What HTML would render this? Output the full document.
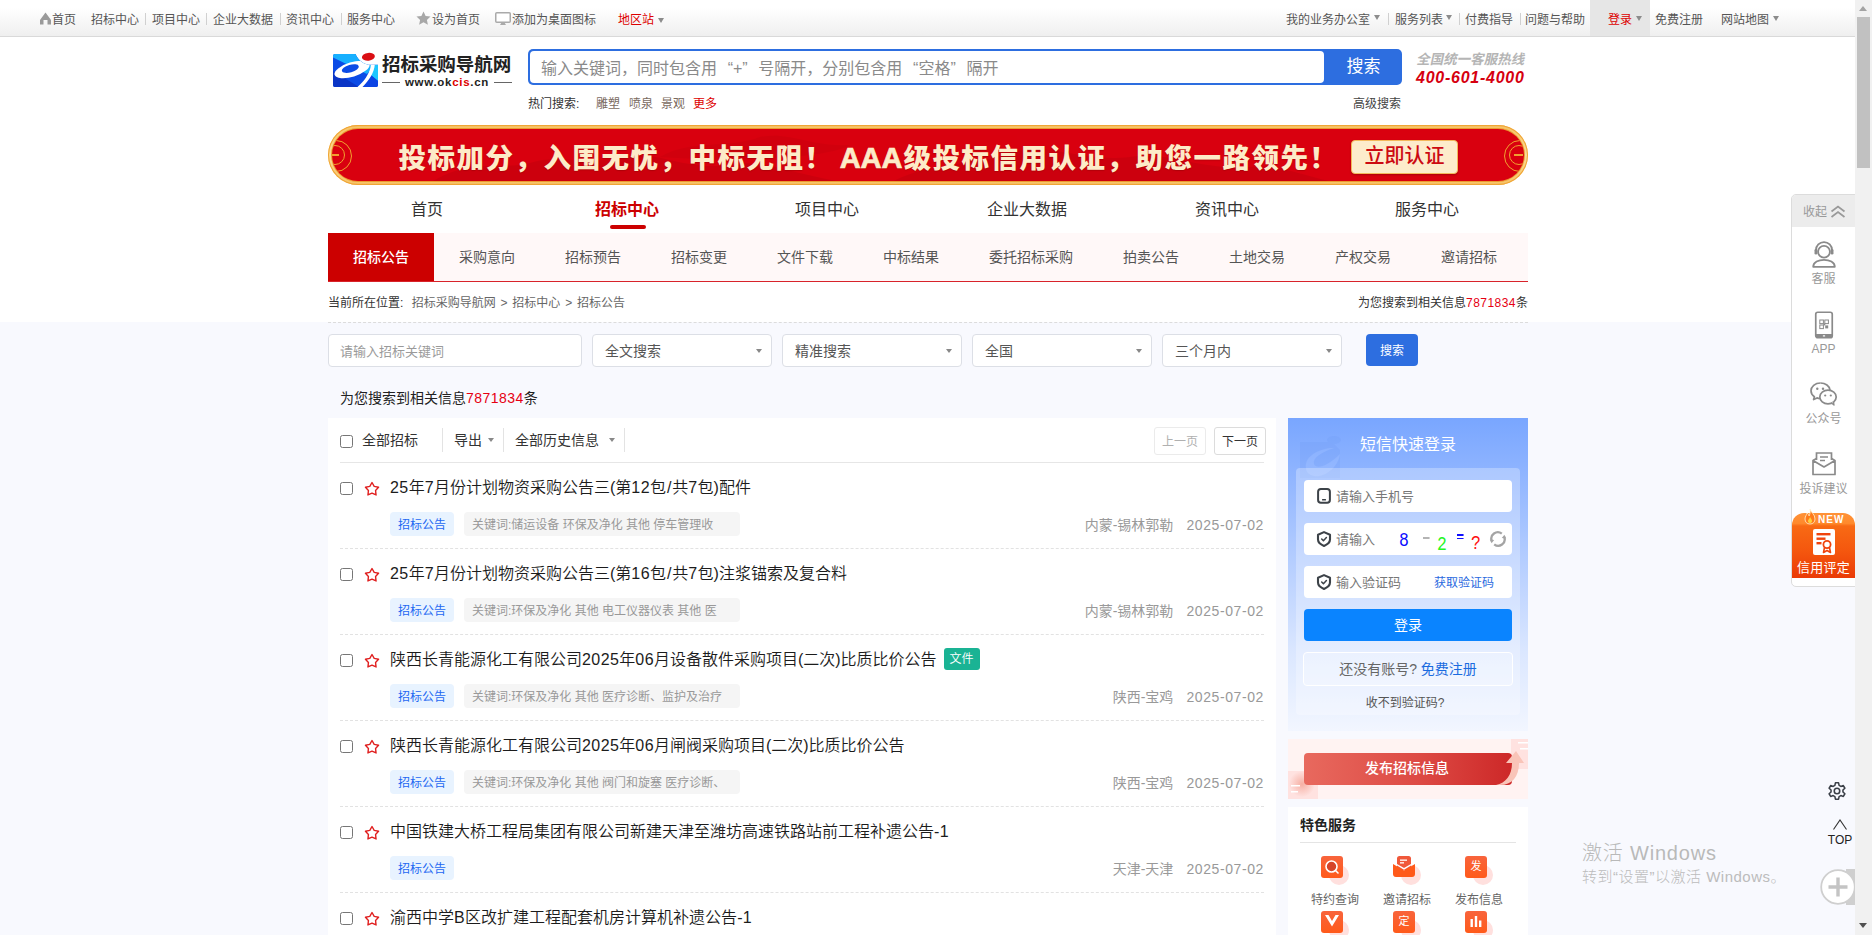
<!DOCTYPE html>
<html lang="zh-CN">
<head>
<meta charset="utf-8">
<title>招标公告 - 招标采购导航网</title>
<style>
*{box-sizing:border-box;margin:0;padding:0}
html,body{width:1872px;height:935px;overflow:hidden;background:#fff}
body{font-family:"Liberation Sans","Noto Sans CJK SC",sans-serif;font-size:12px;color:#333;position:relative}
a{color:inherit;text-decoration:none}
ul{list-style:none}
.abs{position:absolute}
#page{position:absolute;left:0;top:0;width:1855px;height:935px;overflow:hidden;background:#fff}
/* fake scrollbar */
#sb{position:absolute;left:1855px;top:0;width:17px;height:935px;background:#f1f1f1}
#sb .th{position:absolute;left:2px;top:17px;width:13px;height:151px;background:#c1c1c1}
#sb .up{position:absolute;left:4px;top:6px;width:0;height:0;border-left:4.5px solid transparent;border-right:4.5px solid transparent;border-bottom:5px solid #a3a3a3}
#sb .dn{position:absolute;left:4px;top:923px;width:0;height:0;border-left:4.5px solid transparent;border-right:4.5px solid transparent;border-top:5px solid #505050}
/* top bar */
#top{position:absolute;left:0;top:0;width:1855px;height:37px;background:linear-gradient(#fff 0,#fff 8px,#efefef 100%);border-bottom:1px solid #d9d9d9;color:#555;font-size:12px;line-height:37px}
#top span,#top a{position:absolute;top:0;white-space:nowrap}
#top a{top:1.5px}
#top .sep{color:#ccc;width:1px;height:12px;top:13px;background:#d0d0d0}
#top .car{width:0;height:0;border-left:3.5px solid transparent;border-right:3.5px solid transparent;border-top:5px solid #8c8c8c}

/* header */
#logo{position:absolute;left:332px;top:50px;width:182px;height:40px}
#logo .t1{position:absolute;left:50px;top:2px;font-size:18.5px;font-weight:700;color:#222;letter-spacing:-.05px;white-space:nowrap;line-height:26px}
#logo .t2{position:absolute;left:50px;top:24px;width:130px;font-family:"Liberation Sans",sans-serif;font-size:11.5px;font-weight:700;color:#222;white-space:nowrap;line-height:16px;letter-spacing:.7px;text-align:center}
#logo .t2 b{color:#d00}
#logo .ln{position:absolute;top:32px;height:1px;width:18px;background:#666}
#sbwrap{position:absolute;left:528px;top:49px;width:874px;height:36px;border-radius:5px;background:#2d6ee0}
#sbox{position:absolute;left:530px;top:51px;width:794px;height:32px;border-radius:4px;background:#fff;font-size:16px;line-height:35px;color:#8a8a8a;padding-left:11px;white-space:nowrap}
#sbox q{display:inline-block;width:16px;quotes:none}#sbox q.l{text-align:right}#sbox q.r{text-align:left}
#sbtn{position:absolute;left:1325px;top:49px;width:77px;height:36px;color:#fff;font-size:17px;line-height:35px;text-align:center}
#hot{position:absolute;left:528px;top:95.5px;font-size:12px;line-height:16px;white-space:nowrap;color:#333}
#hot a{position:absolute;top:0;color:#7a6a60}
#adv{position:absolute;left:1353px;top:95.5px;font-size:12px;line-height:16px;color:#444}
#tel1{position:absolute;left:1417px;top:51px;font-size:13.5px;font-weight:700;color:#b5b5b5;line-height:18px;white-space:nowrap;transform:skewX(-12deg)}
#tel2{position:absolute;left:1416px;top:67.5px;font-size:16px;font-weight:700;font-style:italic;color:#d6000f;line-height:20px;white-space:nowrap;letter-spacing:.75px}
/* banner */
#ban{position:absolute;left:328px;top:125px;width:1200px;height:60px;border-radius:30px;background:linear-gradient(#efa236 0,#f6c468 3%,#fbdc96 50%,#f6c468 97%,#efa236 100%);overflow:hidden;box-shadow:inset 0 0 0 1px #f0a535}
#ban .in{position:absolute;left:4px;top:4px;right:4px;bottom:4px;border-radius:26px;background:#d9000f;overflow:hidden;box-shadow:0 0 0 1px #eb9a30}
#ban .tx{position:absolute;left:66.5px;top:8.5px;font-size:27.5px;letter-spacing:1.5px;font-weight:900;color:#fdebc8;line-height:40px;white-space:nowrap;text-shadow:0 1px 1px rgba(120,0,0,.35)}
#ban .bt{position:absolute;left:1019px;top:11px;width:107px;height:34px;border-radius:4px;background:#fdeccb;border:1.5px solid #f3b75a;color:#cc0a12;font-size:20px;font-weight:500;line-height:31px;text-align:center;box-shadow:0 1px 2px rgba(100,0,0,.4)}
#ban .ring{position:absolute;top:10.500px;width:32px;height:32px;border-radius:50%;border:1.800px solid #f0a030}
#ban .ring i{position:absolute;left:4.200px;top:4.200px;width:20px;height:20px;border-radius:50%;border:1.800px solid #f0a030}
#ban .ring u{position:absolute;left:9px;top:13.300px;width:9px;height:1.800px;background:#f0a030}
#ban .mt{position:absolute;left:-2px;top:-2px}
/* nav */
#nav a{position:absolute;top:198px;width:200px;text-align:center;font-size:16px;line-height:24px;color:#333}
#nav a.on{color:#cc0000;font-weight:700}
#nav i{position:absolute;left:610px;top:225px;width:36px;height:4px;border-radius:2px;background:#cc0000}
#sub{position:absolute;left:328px;top:233px;width:1200px;height:49px;background:#fff8f8;border-bottom:1.5px solid #d8232a;font-size:14px;line-height:49px;color:#555;white-space:nowrap}
#sub a{display:inline-block;padding:0 25px;height:48px;vertical-align:top}
#sub a.on{background:#cc0000;color:#fff;font-weight:500}
#crumb{position:absolute;left:328px;top:295px;width:1200px;font-size:12px;line-height:16px;color:#666}
#crumb b{font-weight:400;color:#333}
#crumb .r{position:absolute;right:0;top:0;color:#333}
#crumb .r em{font-style:normal;color:#e60012;letter-spacing:.45px}
#crumb s{text-decoration:none;margin:0 1.5px}
#dash{position:absolute;left:328px;top:322px;width:1200px;height:0;border-top:1px dashed #dcdcdc}
#bg{position:absolute;left:0;top:322px;width:1855px;height:613px;background:#f8f9fe}
.wrap{position:absolute;left:328px;width:1200px}

/* filter */
.fi{position:absolute;top:334px;height:33px;background:#fff;border:1px solid #dcdfe6;border-radius:4px;font-size:14px;line-height:33px;padding-left:12px;color:#555;white-space:nowrap}
.fi.ph{color:#9a9a9a;font-size:13px;padding-left:11px}
.fi i{position:absolute;right:9px;top:14px;width:0;height:0;border-left:3.5px solid transparent;border-right:3.5px solid transparent;border-top:4.5px solid #888}
#fbtn{position:absolute;left:1366px;top:334px;width:52px;height:32px;border-radius:4px;background:#2d6ee0;color:#fff;font-size:12px;line-height:34px;text-align:center}
#cnt{position:absolute;left:340px;top:388px;font-size:14px;line-height:20px;color:#222;white-space:nowrap}
#cnt em{font-style:normal;color:#e60012;letter-spacing:.45px}
/* list */
#list{position:absolute;left:328px;top:418px;width:948px;height:520px;background:#fff}
.cb{position:absolute;width:13px;height:13px;border:1px solid #767676;border-radius:2.5px;background:#fff}
#lh{position:absolute;left:12px;top:0;width:924px;height:45px;border-bottom:1px solid #e6e6e6;font-size:14px;line-height:20px;color:#333}
#lh span{position:absolute;top:12px;white-space:nowrap}
#lh .sp{top:10px;width:1px;height:24px;background:#e3e3e3}
#lh .ca{top:20px;width:0;height:0;border-left:3.5px solid transparent;border-right:3.5px solid transparent;border-top:4.5px solid #888}
#lh .pg{top:9px;height:28px;width:52px;border:1px solid #dcdcdc;border-radius:3px;text-align:center;line-height:28.5px;font-size:12px;background:#fff;color:#333}
.it{position:absolute;left:12px;width:924px;height:86px;border-bottom:1px dashed #e2e2e2}
.it .cb{left:0;top:18.5px}
.it svg{position:absolute;left:24px;top:17.500px}
.it .ti{position:absolute;left:50px;top:13px;font-size:16px;line-height:24px;color:#1c1c1c;white-space:nowrap;font-weight:350}
.it .ti i{font-style:normal;letter-spacing:.42px}
.it .ti i.s{letter-spacing:0;margin:0 .9px}
.it .tg{position:absolute;left:50px;top:49px;width:64px;height:24px;border-radius:4px;background:#e8f3ff;color:#2468f2;font-size:12px;line-height:26px;text-align:center}
.it .kw{position:absolute;left:124px;top:49px;width:276px;height:24px;border-radius:4px;background:#f5f5f5;color:#999;font-size:12px;line-height:26px;padding-left:8px;white-space:nowrap;overflow:hidden}
.it .rt{position:absolute;right:0;top:52px;font-size:14px;line-height:20px;color:#999;white-space:nowrap}
.it .rt b{font-weight:400;margin-left:13px;letter-spacing:.6px}
.it .fl{display:inline-block;vertical-align:top;margin:0 0 0 7px;width:36px;height:22px;border-radius:3px;background:#1ab394;color:#fff;font-size:12px;line-height:22px;text-align:center}

/* login */
#lg{position:absolute;left:1288px;top:418px;width:240px;height:313px;background:linear-gradient(#79a6ff 0,#8db3ff 16%,#b4cdff 45%,#dbe7ff 75%,#f2f6ff 100%);overflow:hidden}
#lg .wm{position:absolute;left:6px;top:10px;opacity:.05}
#lg h3{position:absolute;left:0;top:13.5px;width:240px;text-align:center;font-size:16px;font-weight:400;color:#fff;line-height:26px}
#lg .in{position:absolute;left:8px;top:50px;width:224px;height:246.5px;border-radius:4px;background:rgba(255,255,255,.28)}
#lg .ip{position:absolute;left:16px;width:208px;height:32px;border-radius:4px;background:#fff;font-size:13px;line-height:34px;color:#777;padding-left:32px;white-space:nowrap}
#lg .ip svg{position:absolute;left:12px;top:8px}
#lg .lb{position:absolute;left:16px;top:191px;width:208px;height:32px;border-radius:4px;background:#0a84ff;color:#fff;font-size:14px;line-height:32px;text-align:center}
#lg .rg{position:absolute;left:15px;top:234px;width:210px;height:34px;border-radius:4px;border:1px solid #fff;background:rgba(255,255,255,.25);font-size:14px;line-height:32px;text-align:center;color:#666}
#lg .rg a{color:#1a6be0}
#lg .no{position:absolute;left:0;top:275.5px;width:234px;text-align:center;font-size:12px;line-height:18px;color:#555}
#lg .cap{position:absolute;font-family:"Liberation Mono",monospace;font-weight:400;font-size:20px;line-height:20px;transform:scaleX(.82);transform-origin:0 0}
/* publish */
#pub{position:absolute;left:1288px;top:739px;width:240px;height:60px;background:#fff3f2;overflow:hidden}
#pub .b{position:absolute;left:16px;top:14px;width:208px;height:32px;border-radius:4px;background:linear-gradient(90deg,#e8695e 0,#dd4a44 55%,#cd2828 100%);color:#fff;font-size:14px;font-weight:500;line-height:31px;text-align:center;padding-right:2px}
/* services */
#svc{position:absolute;left:1288px;top:807px;width:240px;height:140px;background:#fff}
#svc h4{position:absolute;left:12px;top:8px;font-size:14px;font-weight:700;color:#222;line-height:20px}
#svc .l{position:absolute;left:12px;top:35px;width:216px;height:1px;background:#e4e4e4}
#svc .ic{position:absolute;width:30px;height:30px}
#svc .ic i{position:absolute;left:8px;top:9px;width:20px;height:20px;border-radius:50%;background:#ffe0de}
#svc .ic b{position:absolute;left:0;top:0;width:22px;height:22px;border-radius:3px;background:linear-gradient(#f8643c,#ff5a1a);color:#fff;font-size:11px;font-weight:400;line-height:21px;text-align:center;overflow:hidden}
#svc .ic b svg{position:absolute;left:0;top:0}
#svc .tx{position:absolute;top:85px;width:72px;text-align:center;font-size:12px;line-height:16px;color:#666}

/* float */
#fl{position:absolute;left:1791px;top:194px;width:70px;height:393px;border:1px solid #dcdcdc;border-radius:5px;background:#fff;overflow:hidden}
#fl .h{position:absolute;left:0;top:0;width:70px;height:32px;background:#ececec;color:#999;font-size:12px;line-height:35px;padding-left:11px}
#fl .h svg{position:absolute;left:38px;top:9.5px}
#fl .t{position:absolute;left:0;width:63px;text-align:center;font-size:12px;line-height:16px;color:#999}
#fl svg.i{position:absolute}
#fl .cr{position:absolute;left:0;top:318px;width:63px;height:65px;border-radius:12px 12px 0 0;background:linear-gradient(#ff9238 0,#ff8a2c 16%,#f86a14 20%,#f4560e 60%,#ea3a06 100%)}
#fl .cr .n{position:absolute;left:26px;top:1px;font-size:10px;font-weight:700;color:#fff;letter-spacing:1px;line-height:12px}
#fl .cr .c{position:absolute;left:0;top:46.5px;width:63px;text-align:center;font-size:13px;color:#fff;line-height:16px;letter-spacing:.3px}
#wm1{position:absolute;left:1582px;top:840px;font-size:20px;line-height:26px;color:#b9b9b9;white-space:nowrap;letter-spacing:.8px;font-weight:300}
#wm2{position:absolute;left:1582px;top:866.5px;font-size:15px;line-height:20px;color:#bcbcbc;white-space:nowrap;font-weight:300;letter-spacing:.5px}
#topb{position:absolute;left:1826px;top:833px;width:28px;text-align:center;font-size:12px;line-height:14px;color:#222}
#plus{position:absolute;left:1820px;top:869px;width:36px;height:36px}
</style>
</head>
<body>
<div id="page">

<div id="top">
  <svg class="abs" style="left:38.5px;top:12px" width="13" height="13" viewBox="0 0 13 13"><path d="M6.5 0.5 L12 8 L12 12.5 L8.5 12.5 L8.5 8 L4.5 8 L4.5 12.5 L1 12.5 L1 8 Z" fill="#9a9a9a"/></svg>
  <a style="left:52px">首页</a>
  <a style="left:91px">招标中心</a><span class="sep" style="left:145px"></span>
  <a style="left:152px">项目中心</a><span class="sep" style="left:206px"></span>
  <a style="left:213px">企业大数据</a><span class="sep" style="left:280px"></span>
  <a style="left:286px">资讯中心</a><span class="sep" style="left:341px"></span>
  <a style="left:347px">服务中心</a>
  <svg class="abs" style="left:416px;top:11px" width="15" height="14" viewBox="0 0 15 14"><path d="M7.5 0.5 L9.6 5 L14.5 5.6 L10.9 8.9 L11.9 13.7 L7.5 11.3 L3.1 13.7 L4.1 8.9 L0.5 5.6 L5.4 5 Z" fill="#a8a8a8"/></svg>
  <a style="left:432px">设为首页</a>
  <svg class="abs" style="left:495px;top:12px" width="16" height="14" viewBox="0 0 16 14"><rect x="0.75" y="0.75" width="14.5" height="9.5" rx="1" fill="#fff" stroke="#aaa" stroke-width="1.5"/><path d="M5 13 L11 13 L9.5 10.5 L6.5 10.5 Z" fill="#aaa"/></svg>
  <a style="left:512px">添加为桌面图标</a>
  <a style="left:618px;color:#d00">地区站</a><span class="car" style="left:658px;top:18px"></span>

  <a style="left:1286px">我的业务办公室</a><span class="car" style="left:1374px;top:15px"></span><span class="sep" style="left:1388px"></span>
  <a style="left:1395px">服务列表</a><span class="car" style="left:1446px;top:15px"></span><span class="sep" style="left:1459px"></span>
  <a style="left:1465px">付费指导</a><span class="sep" style="left:1520px"></span>
  <a style="left:1525px">问题与帮助</a>
  <span style="left:1590px;width:60px;height:36px;background:#e6e6e6"></span>
  <a style="left:1608px;color:#d00">登录</a><span class="car" style="left:1636px;top:16px"></span>
  <a style="left:1655px">免费注册</a>
  <a style="left:1721px">网站地图</a><span class="car" style="left:1773px;top:16px"></span>
</div>


<div id="logo">
  <svg class="abs" style="left:0;top:2px" width="48" height="36" viewBox="-1 -2 48 36">
    <defs><clipPath id="lc"><path d="M2 0 L22.500 0 C24.500 5 29 9.500 35 10.700 L45 10.700 L45 31 Q45 33 43 33 L2 33 Q0 33 0 31 L0 2 Q0 0 2 0 Z"/></clipPath></defs>
    <g clip-path="url(#lc)">
      <rect x="0" y="0" width="45" height="33" fill="#0b4be6"/>
      <path d="M0 0 L24 0 L36 11 L42 11 L34 20 L0 3.500 Z" fill="#17b0ff"/>
      <path d="M0 17 L26 33 L0 33 Z" fill="#0a35c6"/>
      <path d="M38 10.700 L45 10.700 L45 27 L36 19.500 Z" fill="#1ec6ff"/>
      <path d="M36 19.500 L45 27 L45 33 L26 33 Z" fill="#0c44e4"/>
      <g transform="rotate(-17 19 15.500)"><ellipse cx="19" cy="15.500" rx="18.200" ry="7.200" fill="#fff"/></g>
      <path d="M38 9 L41.800 10.500 C41.500 18 36 26.500 29.500 33 L24.500 33 C31 27.500 36 20 37.500 13.500 Z" fill="#fff"/>
      <g transform="rotate(-16 17.300 14.600)"><ellipse cx="17.300" cy="14.600" rx="8.800" ry="3.700" fill="#0b4be6"/></g>
      <path d="M8.700 16.500 C10 13 14 11 18 10.500 C15 13 12 15.500 11 18.500 Z" fill="#17b0ff" opacity=".0"/>
    </g>
    <ellipse cx="35.400" cy="2.800" rx="6.500" ry="3.900" transform="rotate(-6 35.400 2.800)" fill="#da0f14"/>
  </svg>
  <div class="t1">招标采购导航网</div>
  <i class="ln" style="left:50px"></i><div class="t2">www.ok<b>cis</b>.cn</div><i class="ln" style="left:162px"></i>
</div>
<div id="sbwrap"></div>
<div id="sbox">输入关键词，同时包含用<q class=l>“</q>+<q class=r>”</q>号隔开，分别包含用<q class=l>“</q>空格<q class=r>”</q>隔开</div>
<div id="sbtn">搜索</div>
<div id="hot">热门搜索: <a style="left:68px">雕塑</a><a style="left:101px">喷泉</a><a style="left:133px">景观</a><a style="left:165px;color:#d00">更多</a></div>
<div id="adv">高级搜索</div>
<div id="tel1">全国统一客服热线</div>
<div id="tel2">400-601-4000</div>

<div id="ban"><div class="in">
  <svg class="mt" width="1196" height="56" viewBox="0 0 1196 56"><g fill="#b8000c" opacity=".38"><path d="M100 56 C140 30 170 44 200 36 C230 26 250 40 290 30 C330 22 350 44 400 38 C430 30 470 50 520 56 Z"/><path d="M560 56 C600 34 640 40 680 26 C720 14 750 36 800 30 C840 24 870 44 920 40 C950 36 980 52 1010 56 Z"/><path d="M330 30 C360 12 400 22 430 10 C460 4 480 20 520 18 C500 30 420 36 330 30 Z" opacity=".6"/></g></svg>
  <div class="ring" style="left:-12px"><i></i><u></u></div>
  <div class="ring" style="right:-12px"><i></i><u></u></div>
  <div class="tx">投标加分，入围无忧，中标无阻！ <span style="letter-spacing:0;font-size:29px;margin:0 1px 0 -3px;-webkit-text-stroke:.7px #fdebc8">AAA</span>级投标信用认证，助您一路领先！</div>
  <div class="bt">立即认证</div>
</div></div>

<div id="nav">
  <a style="left:327px">首页</a><a class="on" style="left:527px">招标中心</a><a style="left:727px">项目中心</a><a style="left:927px">企业大数据</a><a style="left:1127px">资讯中心</a><a style="left:1327px">服务中心</a><i></i>
</div>
<div id="sub"><a class="on">招标公告</a><a>采购意向</a><a>招标预告</a><a>招标变更</a><a>文件下载</a><a>中标结果</a><a>委托招标采购</a><a>拍卖公告</a><a>土地交易</a><a>产权交易</a><a>邀请招标</a></div>
<div id="bg"></div>
<div id="crumb"><b style="margin-right:5px">当前所在位置:</b> 招标采购导航网 <s>&gt;</s> 招标中心 <s>&gt;</s> 招标公告<span class="r">为您搜索到相关信息<em>7871834</em>条</span></div>
<div id="dash"></div>

<div class="fi ph" style="left:328px;width:254px">请输入招标关键词</div>
<div class="fi" style="left:592px;width:180px">全文搜索<i></i></div>
<div class="fi" style="left:782px;width:180px">精准搜索<i></i></div>
<div class="fi" style="left:972px;width:180px">全国<i></i></div>
<div class="fi" style="left:1162px;width:180px">三个月内<i></i></div>
<div id="fbtn">搜索</div>
<div id="cnt">为您搜索到相关信息<em>7871834</em>条</div>
<div id="list">
  <div id="lh">
    <i class="cb" style="left:0;top:17px"></i>
    <span style="left:22px">全部招标</span><span class="sp" style="left:102px"></span>
    <span style="left:114px">导出</span><span class="ca" style="left:148px"></span><span class="sp" style="left:163px"></span>
    <span style="left:175px">全部历史信息</span><span class="ca" style="left:269px"></span><span class="sp" style="left:284px"></span>
    <span class="pg" style="left:814px;color:#b0b0b0;border-color:#ebebeb">上一页</span><span class="pg" style="left:874px">下一页</span>
  </div>
<div class="it" style="top:45px"><i class="cb"></i><svg width="16" height="16" viewBox="0 0 16 16"><path d="M8.00 1.50 L10.20 5.37 L14.56 6.27 L11.57 9.56 L12.06 13.98 L8.00 12.15 L3.94 13.98 L4.43 9.56 L1.44 6.27 L5.80 5.37 Z" fill="none" stroke="#e02020" stroke-width="1.400" stroke-linejoin="round"/></svg><div class="ti"><i>25</i>年<i>7</i>月份计划物资采购公告三(第<i>12</i>包<i class=s>/</i>共<i>7</i>包)配件</div><div class="tg">招标公告</div><div class="kw">关键词:储运设备 环保及净化 其他 停车管理收</div><div class="rt">内蒙-锡林郭勒<b>2025-07-02</b></div></div>
<div class="it" style="top:131px"><i class="cb"></i><svg width="16" height="16" viewBox="0 0 16 16"><path d="M8.00 1.50 L10.20 5.37 L14.56 6.27 L11.57 9.56 L12.06 13.98 L8.00 12.15 L3.94 13.98 L4.43 9.56 L1.44 6.27 L5.80 5.37 Z" fill="none" stroke="#e02020" stroke-width="1.400" stroke-linejoin="round"/></svg><div class="ti"><i>25</i>年<i>7</i>月份计划物资采购公告三(第<i>16</i>包<i class=s>/</i>共<i>7</i>包)注浆锚索及复合料</div><div class="tg">招标公告</div><div class="kw">关键词:环保及净化 其他 电工仪器仪表 其他 医</div><div class="rt">内蒙-锡林郭勒<b>2025-07-02</b></div></div>
<div class="it" style="top:217px"><i class="cb"></i><svg width="16" height="16" viewBox="0 0 16 16"><path d="M8.00 1.50 L10.20 5.37 L14.56 6.27 L11.57 9.56 L12.06 13.98 L8.00 12.15 L3.94 13.98 L4.43 9.56 L1.44 6.27 L5.80 5.37 Z" fill="none" stroke="#e02020" stroke-width="1.400" stroke-linejoin="round"/></svg><div class="ti">陕西长青能源化工有限公司<i>2025</i>年<i>06</i>月设备散件采购项目(二次)比质比价公告<span class=fl>文件</span></div><div class="tg">招标公告</div><div class="kw">关键词:环保及净化 其他 医疗诊断、监护及治疗</div><div class="rt">陕西-宝鸡<b>2025-07-02</b></div></div>
<div class="it" style="top:303px"><i class="cb"></i><svg width="16" height="16" viewBox="0 0 16 16"><path d="M8.00 1.50 L10.20 5.37 L14.56 6.27 L11.57 9.56 L12.06 13.98 L8.00 12.15 L3.94 13.98 L4.43 9.56 L1.44 6.27 L5.80 5.37 Z" fill="none" stroke="#e02020" stroke-width="1.400" stroke-linejoin="round"/></svg><div class="ti">陕西长青能源化工有限公司<i>2025</i>年<i>06</i>月闸阀采购项目(二次)比质比价公告</div><div class="tg">招标公告</div><div class="kw">关键词:环保及净化 其他 阀门和旋塞 医疗诊断、</div><div class="rt">陕西-宝鸡<b>2025-07-02</b></div></div>
<div class="it" style="top:389px"><i class="cb"></i><svg width="16" height="16" viewBox="0 0 16 16"><path d="M8.00 1.50 L10.20 5.37 L14.56 6.27 L11.57 9.56 L12.06 13.98 L8.00 12.15 L3.94 13.98 L4.43 9.56 L1.44 6.27 L5.80 5.37 Z" fill="none" stroke="#e02020" stroke-width="1.400" stroke-linejoin="round"/></svg><div class="ti">中国铁建大桥工程局集团有限公司新建天津至潍坊高速铁路站前工程补遗公告<i>-1</i></div><div class="tg">招标公告</div><div class="rt">天津-天津<b>2025-07-02</b></div></div>
<div class="it" style="top:475px"><i class="cb"></i><svg width="16" height="16" viewBox="0 0 16 16"><path d="M8.00 1.50 L10.20 5.37 L14.56 6.27 L11.57 9.56 L12.06 13.98 L8.00 12.15 L3.94 13.98 L4.43 9.56 L1.44 6.27 L5.80 5.37 Z" fill="none" stroke="#e02020" stroke-width="1.400" stroke-linejoin="round"/></svg><div class="ti">渝西中学<i>B</i>区改扩建工程配套机房计算机补遗公告<i>-1</i></div><div class="tg">招标公告</div><div class="rt">重庆-重庆<b>2025-07-02</b></div></div>
</div>

<div id="lg">
  <svg class="wm" width="220" height="70" viewBox="0 0 220 70"><path d="M6 14 L38 14 L46 22 L46 50 L6 50 Z" fill="#2a63d8"/><path d="M12 40 C10 28 26 20 40 20 C28 24 18 30 20 36 C22 42 34 38 46 26 C44 40 30 50 20 48 C15 47 12 44 12 40 Z" fill="#fff"/><ellipse cx="40" cy="12" rx="7" ry="4" fill="#2a63d8"/></svg>
  <h3>短信快速登录</h3>
  <div class="in"></div>
  <div class="ip" style="top:62px"><svg width="16" height="16" viewBox="0 0 16 16"><rect x="2.100" y="1" width="11.800" height="13.800" rx="2.800" fill="none" stroke="#3c4248" stroke-width="2"/><rect x="6" y="10.900" width="4" height="1.700" rx=".5" fill="#3c4248"/></svg>请输入手机号</div>
  <div class="ip" style="top:105px"><svg width="16" height="16" viewBox="0 0 16 16"><path d="M8 1.100 L14 3.700 L14 8.600 C14 11.400 11.300 13.600 8 14.900 C4.700 13.600 2 11.400 2 8.600 L2 3.700 Z" fill="none" stroke="#3c4248" stroke-width="2.100" stroke-linejoin="round"/><path d="M5.700 8 L7.400 9.700 L10.400 6.500" fill="none" stroke="#3c4248" stroke-width="1.500" stroke-linecap="round" stroke-linejoin="round"/></svg>请输入
    <span class="cap" style="left:94.5px;top:7.500px;color:#0a0aff">8</span>
    <span class="cap" style="left:119px;top:14px;width:8px;height:1.500px;background:#b4b4b4"></span>
    <span class="cap" style="left:132.500px;top:12px;color:#25f525">2</span>
    <span class="cap" style="left:152.500px;top:11px;width:8px;height:1.800px;background:#1010ff"></span><span class="cap" style="left:152.500px;top:14.500px;width:8px;height:1.800px;background:#1010ff"></span>
    <span class="cap" style="left:166.500px;top:11px;color:#ff1010">?</span>
    <svg style="left:185px;top:7px" width="18" height="18" viewBox="0 0 18 18"><path d="M2.800 11 A6.400 6.400 0 0 1 12.800 3.700" fill="none" stroke="#a4a4a4" stroke-width="2.300"/><path d="M15.200 7 A6.400 6.400 0 0 1 5.200 14.300" fill="none" stroke="#a4a4a4" stroke-width="2.300"/><path d="M0.800 9.500 L5.200 10 L2.600 13.200 Z" fill="#a4a4a4"/><path d="M17.200 8.500 L12.800 8 L15.400 4.800 Z" fill="#a4a4a4"/></svg>
  </div>
  <div class="ip" style="top:148px"><svg width="16" height="16" viewBox="0 0 16 16"><path d="M8 1.100 L14 3.700 L14 8.600 C14 11.400 11.300 13.600 8 14.900 C4.700 13.600 2 11.400 2 8.600 L2 3.700 Z" fill="none" stroke="#3c4248" stroke-width="2.100" stroke-linejoin="round"/><path d="M5.700 8 L7.400 9.700 L10.400 6.500" fill="none" stroke="#3c4248" stroke-width="1.500" stroke-linecap="round" stroke-linejoin="round"/></svg>输入验证码<a style="position:absolute;left:130px;top:0;font-size:12px;color:#2a6ae0">获取验证码</a></div>
  <div class="lb">登录</div>
  <div class="rg">还没有账号? <a>免费注册</a></div>
  <div class="no">收不到验证码?</div>
</div>
<div id="pub">
  <svg class="abs" style="left:0;top:0" width="240" height="60" viewBox="0 0 240 60">
    <defs><radialGradient id="pg1"><stop offset="0" stop-color="#f6b0a4"/><stop offset="1" stop-color="#f6b0a4" stop-opacity="0"/></radialGradient></defs>
    <rect x="0" y="32" width="30" height="28" fill="#ffe2e0"/><circle cx="14" cy="45" r="13" fill="url(#pg1)"/>
    <rect x="3" y="46" width="9" height="1.500" fill="#fff"/><rect x="3" y="52" width="7" height="1.500" fill="#fff"/>
    <rect x="223" y="0" width="17" height="30" fill="#ffe2e0"/><rect x="230" y="3" width="10" height="1.500" fill="#fff"/><rect x="232" y="9" width="8" height="1.500" fill="#fff"/>
  </svg>
  <div class="b">发布招标信息</div>
  <svg class="abs" style="left:204px;top:10px" width="32" height="40" viewBox="0 0 32 40"><path d="M4 36 C14 34 20 26 20 14 L14 14 L24 2 L32 14 L27 14 C27 28 20 36 8 36 Z" fill="#f9c4b8"/></svg>
</div>
<div id="svc">
  <h4>特色服务</h4><div class="l"></div>
  <div class="ic" style="left:33px;top:49px"><i></i><b><svg width="22" height="22" viewBox="0 0 22 22"><circle cx="10.500" cy="10.500" r="5.500" fill="#d6452a" stroke="#fff" stroke-width="1.600"/><path d="M14.500 14.500 L17 17" stroke="#fff" stroke-width="1.600" stroke-linecap="round"/></svg></b></div>
  <div class="ic" style="left:105px;top:49px"><i></i><b style="background:none"><svg width="22" height="22" viewBox="0 0 22 22"><rect x="4" y="0" width="14" height="14" rx="2.500" fill="#f0583a"/><rect x="7" y="3.500" width="7" height="1.300" fill="#fff"/><rect x="7" y="6.200" width="4" height="1.300" fill="#fff"/><path d="M0 8 L11 14.500 L22 8 L22 18 Q22 21 19 21 L3 21 Q0 21 0 18 Z" fill="#ff5a1a"/><path d="M4 9.500 L11 13.800 L18 9.500 L18 8 L11 12 L4 8 Z" fill="#fff"/></svg></b></div>
  <div class="ic" style="left:177px;top:49px"><i></i><b>发</b></div>
  <div class="tx" style="left:11px">特约查询</div><div class="tx" style="left:83px">邀请招标</div><div class="tx" style="left:155px">发布信息</div>
  <div class="ic" style="left:33px;top:104px"><i></i><b><svg width="22" height="22" viewBox="0 0 22 22"><path d="M4 4 L7.500 4 L11 10 L14.500 4 L18 4 L11 15.500 Z" fill="#fff"/></svg></b></div>
  <div class="ic" style="left:105px;top:104px"><i></i><b>定</b></div>
  <div class="ic" style="left:177px;top:104px"><i></i><b><svg width="22" height="22" viewBox="0 0 22 22"><rect x="5.500" y="8" width="2.400" height="8" fill="#fff"/><rect x="9.800" y="5" width="2.400" height="11" fill="#fff"/><rect x="14" y="9.500" width="2.400" height="6.500" fill="#fff"/></svg></b></div>
</div>

<div id="fl">
  <div class="h">收起<svg width="16" height="14" viewBox="0 0 16 14"><path d="M1.500 6.500 L8 1.500 L14.500 6.500 M1.500 12 L8 7 L14.500 12" fill="none" stroke="#999" stroke-width="1.700"/></svg></div>
  <svg class="i" style="left:18px;top:46px" width="28" height="28" viewBox="0 0 26 26"><circle cx="13" cy="10" r="5.500" fill="none" stroke="#8a8a8a" stroke-width="1.700"/><path d="M5.500 11.500 A7.500 7.500 0 0 1 20.500 11.500" fill="none" stroke="#8a8a8a" stroke-width="1.700" transform="translate(0 -3)"/><rect x="4.200" y="7.500" width="2.600" height="5" rx="1.200" fill="#8a8a8a"/><rect x="19.200" y="7.500" width="2.600" height="5" rx="1.200" fill="#8a8a8a"/><path d="M3 24 C3 19.500 8 17.500 13 17.500 C18 17.500 23 19.500 23 24 Z" fill="none" stroke="#8a8a8a" stroke-width="1.700" stroke-linejoin="round"/></svg>
  <div class="t" style="top:76px">客服</div>
  <svg class="i" style="left:22px;top:116px" width="20" height="28" viewBox="0 0 20 28"><rect x="1.750" y="1.250" width="16.500" height="25.500" rx="2" fill="none" stroke="#8a8a8a" stroke-width="1.700"/><path d="M1.750 23 L18.250 23 L18.250 25 Q18.250 26.750 16.500 26.750 L3.500 26.750 Q1.750 26.750 1.750 25 Z" fill="#8a8a8a"/><rect x="8.800" y="24.300" width="2.400" height="1.200" rx=".5" fill="#fff"/><rect x="5.800" y="9" width="3.600" height="3.600" fill="none" stroke="#8a8a8a"/><rect x="10.800" y="9" width="3.600" height="3.600" fill="none" stroke="#8a8a8a"/><rect x="5.800" y="14" width="3.600" height="3.600" fill="none" stroke="#8a8a8a"/><rect x="11.200" y="14.400" width="3" height="3" fill="#8a8a8a"/><rect x="9.300" y="12.400" width="2" height="2" fill="#8a8a8a"/></svg>
  <div class="t" style="top:146px;font-family:'Liberation Sans',sans-serif">APP</div>
  <svg class="i" style="left:17px;top:186px" width="30" height="26" viewBox="0 0 30 26"><path d="M11.500 2 C6 2 2 5.500 2 9.800 C2 12.200 3.300 14.300 5.400 15.700 L4.600 18.600 L8 16.900 C9 17.300 10 17.500 11 17.500" fill="none" stroke="#8a8a8a" stroke-width="1.700" stroke-linejoin="round"/><path d="M11.500 2 C16.500 2 20.500 5 21 9" fill="none" stroke="#8a8a8a" stroke-width="1.700"/><ellipse cx="19" cy="16" rx="8.200" ry="6.800" fill="#fff" stroke="#8a8a8a" stroke-width="1.700"/><path d="M22.500 22 L25 24 L24.500 21" fill="#fff" stroke="#8a8a8a" stroke-width="1.300" stroke-linejoin="round"/><circle cx="8.300" cy="7.800" r="1.200" fill="#8a8a8a"/><circle cx="14" cy="7.800" r="1.200" fill="#8a8a8a"/><circle cx="16.200" cy="14.500" r="1.100" fill="#8a8a8a"/><circle cx="21.800" cy="14.500" r="1.100" fill="#8a8a8a"/></svg>
  <div class="t" style="top:216px">公众号</div>
  <svg class="i" style="left:19px;top:256px" width="26" height="26" viewBox="0 0 26 26"><path d="M5.500 9 L5.500 2 L20.500 2 L20.500 9" fill="none" stroke="#8a8a8a" stroke-width="1.700"/><path d="M9 6 L17 6 M9 9.500 L14 9.500" stroke="#8a8a8a" stroke-width="1.700"/><path d="M2 9.500 L5.500 7.500 M24 9.500 L20.500 7.500 M2 9.500 L2 23.500 L24 23.500 L24 9.500 L13 16 Z" fill="none" stroke="#8a8a8a" stroke-width="1.700" stroke-linejoin="round"/></svg>
  <div class="t" style="top:286px">投诉建议</div>
  <div class="cr">
    <svg class="i" style="left:9px;top:-5px" width="18" height="18" viewBox="0 0 18 18"><path d="M9 1 C10 5 14 6 14 11 C14 14 12 16 9 16 C6 16 4 14 4 11 C4 8 6 7 6 5 C7.500 6 8 7 8 8 C9 6 9.500 4 9 1 Z" fill="#ff7a1a" stroke="#fff2d0" stroke-width=".8"/><path d="M9 9 C10 11 11 11.500 11 13 C11 14.500 10 15 9 15 C8 15 7 14.500 7 13 C7 11.500 8.500 11 9 9 Z" fill="#ffd23a"/></svg>
    <div class="n">NEW</div>
    <svg class="i" style="left:19.500px;top:15px" width="24" height="28" viewBox="0 0 24 28"><rect x="1" y="1" width="22" height="26" rx="2" fill="#fff"/><rect x="4.500" y="5" width="14" height="2.400" fill="#f0430c"/><rect x="4.500" y="9.500" width="9" height="2.400" fill="#f0430c"/><rect x="4.500" y="14" width="5" height="2.400" fill="#f0430c"/><circle cx="15" cy="16.500" r="3.600" fill="#fff" stroke="#f0430c" stroke-width="1.800"/><path d="M12.500 19.500 L11.500 24.500 L15 22.500 L18.500 24.500 L17.500 19.500" fill="none" stroke="#f0430c" stroke-width="1.600" stroke-linejoin="round"/></svg>
    <div class="c">信用评定</div>
  </div>
</div>
<svg class="abs" style="left:1826px;top:780px" width="22" height="22" viewBox="0 0 24 24"><path d="M10.300 2 L13.700 2 L14.300 4.800 L16.200 5.900 L18.900 5 L20.600 7.900 L18.500 9.800 L18.500 12 L20.600 13.900 L18.900 16.800 L16.200 15.900 L14.300 17 L13.700 19.800 L10.300 19.800 L9.700 17 L7.800 15.900 L5.100 16.800 L3.400 13.900 L5.500 12 L5.500 9.800 L3.400 7.900 L5.100 5 L7.800 5.900 L9.700 4.800 Z" transform="translate(0 1.100)" fill="none" stroke="#3a3f47" stroke-width="1.700" stroke-linejoin="round"/><circle cx="12" cy="12" r="3" fill="none" stroke="#3a3f47" stroke-width="1.700"/></svg>
<svg class="abs" style="left:1832px;top:818px" width="16" height="13" viewBox="0 0 16 13"><path d="M1.500 11.500 L8 2 L14.500 11.500" fill="none" stroke="#333" stroke-width="1.100"/></svg>
<div id="topb">TOP</div>
<div class="abs" style="left:1846px;top:869px;width:9px;height:36px;background:#cfcfcf"></div>
<svg id="plus" viewBox="0 0 36 36"><circle cx="18" cy="18" r="16.800" fill="#fff" stroke="#cfcfcf" stroke-width="1.800"/><path d="M18 8.500 L18 27.500 M8.500 18 L27.500 18" stroke="#c4c4c4" stroke-width="3.400"/></svg>
<div id="wm1">激活 Windows</div>
<div id="wm2">转到“设置”以激活 Windows。</div>





</div>
<div id="sb"><div class="up"></div><div class="th"></div><div class="dn"></div></div>
</body>
</html>
